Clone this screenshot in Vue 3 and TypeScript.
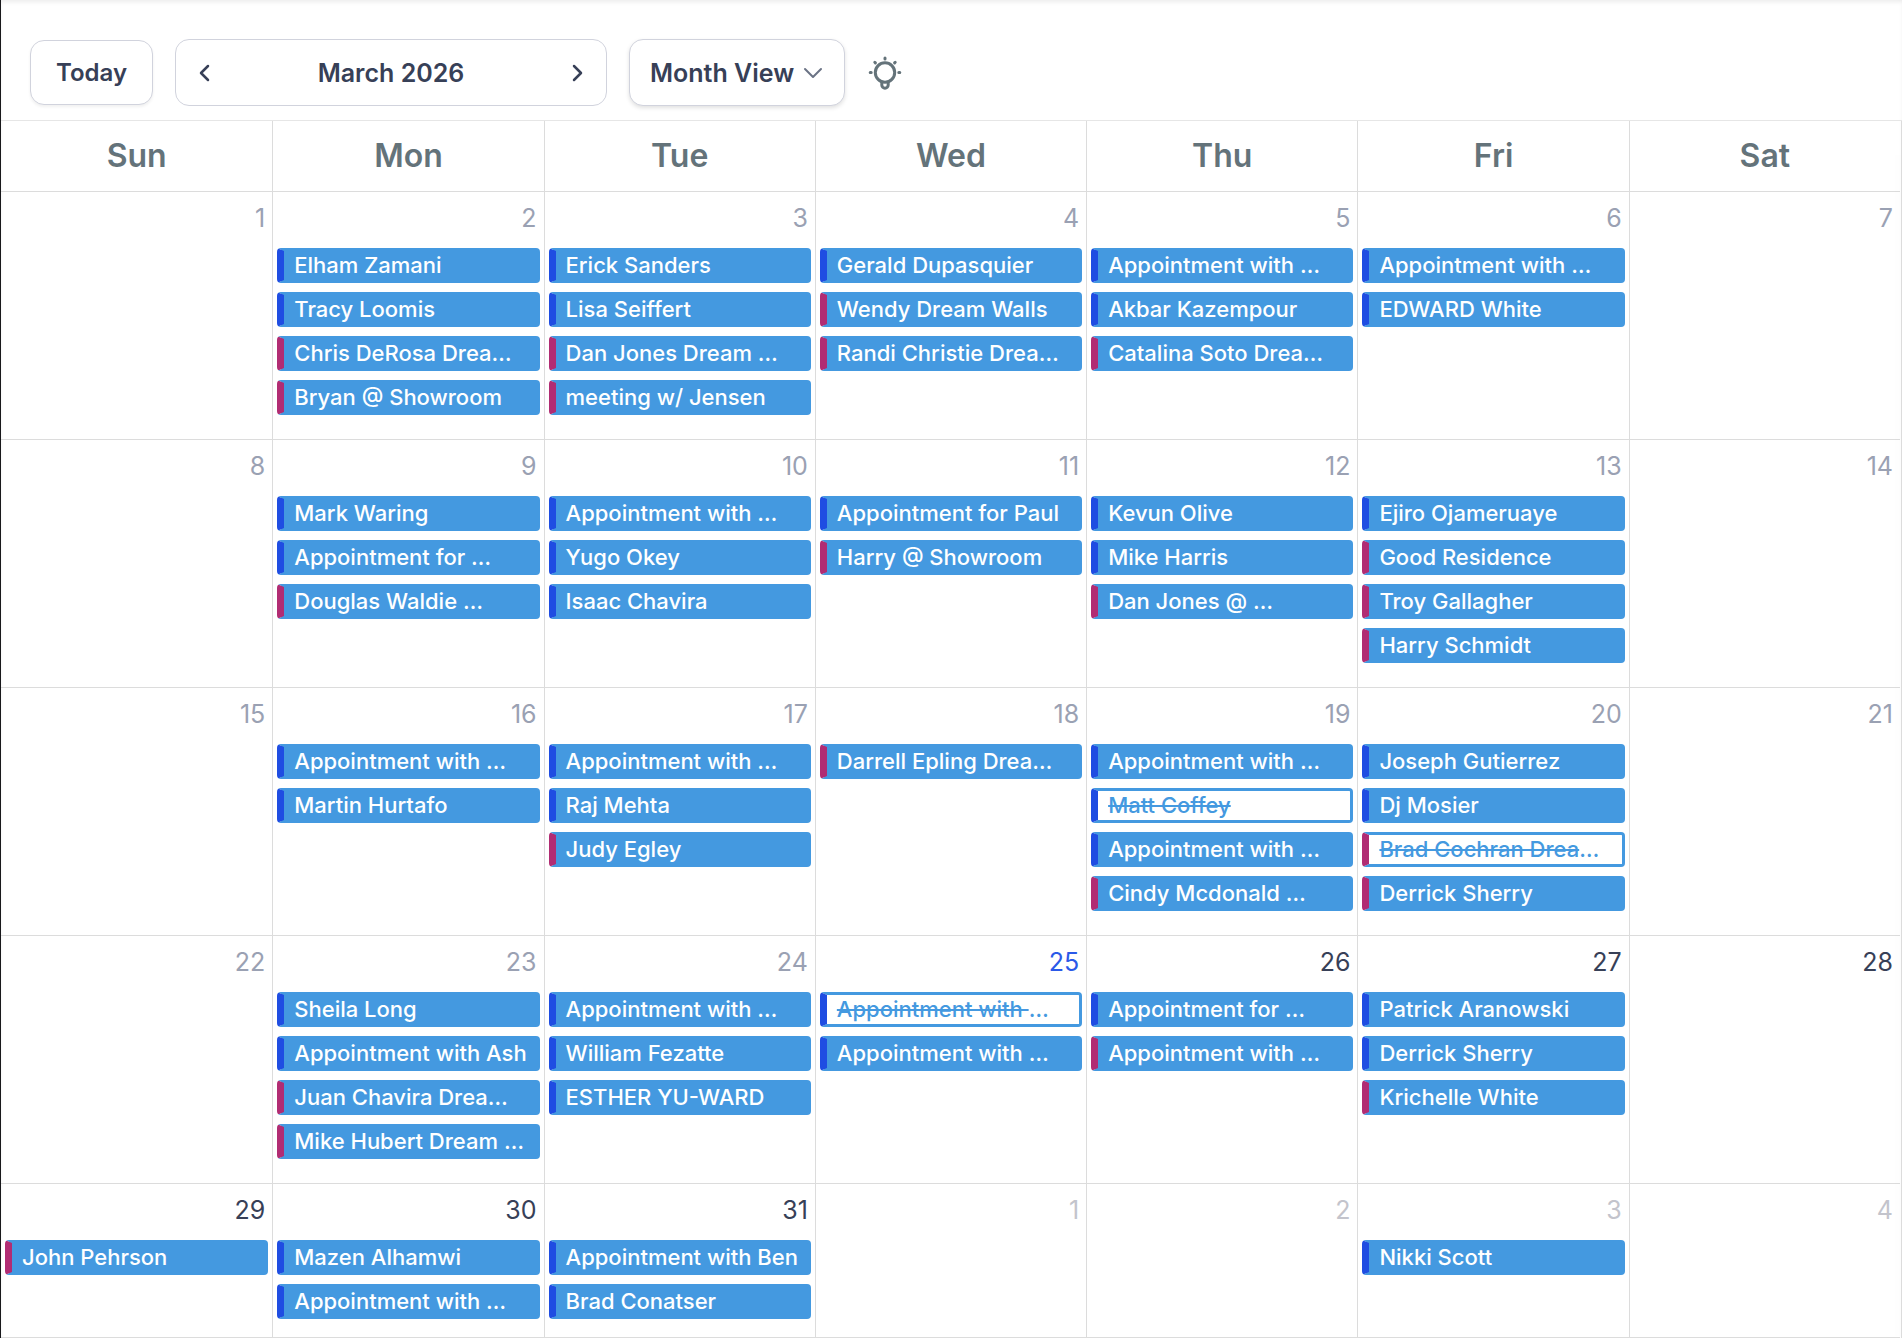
<script setup lang="ts">
import { ref } from 'vue'

type Tone = 'blue' | 'pink'
interface CalendarEvent { title: string; clipped: boolean; tone: Tone; cancelled: boolean }
interface Day { date: number; state: 'past' | 'today' | 'future' | 'outside'; events: CalendarEvent[] }

const weekdays = ['Sun', 'Mon', 'Tue', 'Wed', 'Thu', 'Fri', 'Sat']
const view = ref('Month View')

// Prefixes: "*" marks the pink calendar, "~" marks a cancelled appointment.
const entries: string[][] = [
  [],
  ['Elham Zamani', 'Tracy Loomis', '*Chris DeRosa Drea…', '*Bryan @ Showroom'],
  ['Erick Sanders', 'Lisa Seiffert', '*Dan Jones Dream …', '*meeting w/ Jensen'],
  ['Gerald Dupasquier', '*Wendy Dream Walls', '*Randi Christie Drea…'],
  ['Appointment with …', 'Akbar Kazempour', '*Catalina Soto Drea…'],
  ['Appointment with …', 'EDWARD White'],
  [],
  [],
  ['Mark Waring', 'Appointment for …', '*Douglas Waldie …'],
  ['Appointment with …', 'Yugo Okey', 'Isaac Chavira'],
  ['Appointment for Paul', '*Harry @ Showroom'],
  ['Kevun Olive', 'Mike Harris', '*Dan Jones @ …'],
  ['Ejiro Ojameruaye', '*Good Residence', '*Troy Gallagher', '*Harry Schmidt'],
  [],
  [],
  ['Appointment with …', 'Martin Hurtafo'],
  ['Appointment with …', 'Raj Mehta', '*Judy Egley'],
  ['*Darrell Epling Drea…'],
  ['Appointment with …', '~Matt Coffey', 'Appointment with …', '*Cindy Mcdonald …'],
  ['Joseph Gutierrez', 'Dj Mosier', '*~Brad Cochran Drea…', '*Derrick Sherry'],
  [],
  [],
  ['Sheila Long', 'Appointment with Ash', '*Juan Chavira Drea…', '*Mike Hubert Dream …'],
  ['Appointment with …', 'William Fezatte', 'ESTHER YU-WARD'],
  ['~Appointment with …', 'Appointment with …'],
  ['Appointment for …', '*Appointment with …'],
  ['Patrick Aranowski', 'Derrick Sherry', '*Krichelle White'],
  [],
  ['*John Pehrson'],
  ['Mazen Alhamwi', 'Appointment with …'],
  ['Appointment with Ben', 'Brad Conatser'],
  [],
  [],
  ['Nikki Scott'],
  [],
]

function parse(raw: string): CalendarEvent {
  const tone: Tone = raw.startsWith('*') ? 'pink' : 'blue'
  const rest = raw.replace('*', '')
  const cancelled = rest.startsWith('~')
  const text = rest.replace('~', '')
  return { title: text.replace('…', ''), clipped: text.endsWith('…'), tone, cancelled }
}

const days: Day[] = entries.map((list, i) => {
  const n = i + 1
  return {
    date: n > 31 ? n - 31 : n,
    state: n > 31 ? 'outside' : n > 25 ? 'future' : n === 25 ? 'today' : 'past',
    events: list.map(parse),
  }
})
const weeks = [0, 1, 2, 3, 4].map((w) => days.slice(w * 7, w * 7 + 7))
</script>

<template>
  <main class="calendar">
    <header class="toolbar">
      <button type="button" class="control jump">Today</button>
      <div class="control period">
        <button type="button" class="arrow" aria-label="Previous month">
          <svg width="24" height="24" viewBox="0 0 24 24"><path d="M15 5 8 12l7 7" /></svg>
        </button>
        <span>March 2026</span>
        <button type="button" class="arrow" aria-label="Next month">
          <svg width="24" height="24" viewBox="0 0 24 24"><path d="m9 5 7 7-7 7" /></svg>
        </button>
      </div>
      <div class="view">
        <select v-model="view" class="control" aria-label="Calendar view">
          <option>Month View</option>
        </select>
        <svg width="20" height="12" viewBox="0 0 20 12"><path d="m2 2 8 8 8-8" /></svg>
      </div>
      <button type="button" class="tips" aria-label="Tips">
        <svg width="36" height="36" viewBox="0 0 36 36">
          <circle cx="18" cy="17.500" r="9.700" />
          <path d="M14.800 27v3a3.200 3.200 0 0 0 6.400 0v-3M18 3v1M7.800 7.300l.6.6M28.200 7.300l-.6.6M3.200 17.500h1M31.800 17.500h1" />
        </svg>
      </button>
    </header>

    <section class="grid-area">
      <table>
        <thead>
          <tr><th v-for="d in weekdays" :key="d" scope="col">{{ d }}</th></tr>
        </thead>
        <tbody>
          <tr v-for="(week, w) in weeks" :key="w">
            <td v-for="(day, i) in week" :key="i">
              <div class="date" :class="day.state">{{ day.date }}</div>
              <div class="events">
                <button
                  v-for="(e, k) in day.events"
                  :key="k"
                  type="button"
                  class="event"
                  :class="[e.tone, { cancelled: e.cancelled }]"
                ><span class="title">{{ e.title }}</span><span v-if="e.clipped">…</span></button>
              </div>
            </td>
          </tr>
        </tbody>
      </table>
      <div class="drawer-edge"></div>
    </section>
  </main>
</template>

<style>
body { background: #fff; }
</style>

<style scoped>
.calendar {
  font-family: Inter, "Liberation Sans", sans-serif;
  color: #374057;
  border-left: 1px solid #18181b;
  box-shadow: inset 0 3px 4px -1px #ececec;
}
button, select { font: inherit; color: inherit; margin: 0; cursor: pointer; }
svg { fill: none; stroke: currentColor; stroke-linecap: round; stroke-linejoin: round; flex: none; }

.toolbar {
  display: flex;
  align-items: center;
  gap: 22px;
  height: 67px;
  padding: 39px 29px 14px;
  font-size: 25px;
  font-weight: 600;
}
.control {
  box-sizing: border-box;
  height: 67px;
  border: 1px solid #d1d3dd;
  border-radius: 14px;
  background: #fff;
}
.jump {
  width: 123px;
  height: 65px;
  padding: 0;
  font-size: 24px;
  box-shadow: 0 2px 3px rgba(0, 0, 0, 0.06);
}
.period {
  display: flex;
  align-items: center;
  justify-content: space-between;
  width: 432px;
  padding: 0 17px;
}
.arrow { display: flex; padding: 0; border: 0; background: none; }
.arrow svg { stroke-width: 2.5; }
.view { display: grid; align-items: center; }
.view > * { grid-area: 1 / 1; }
.view select {
  appearance: none;
  width: 216px;
  padding: 1px 40px 0 20px;
  box-shadow: 0 2px 4px rgba(0, 0, 0, 0.12);
}
.view svg { justify-self: end; margin-right: 22px; color: #6b7385; stroke-width: 2; pointer-events: none; }
.tips { display: flex; padding: 0; border: 0; background: none; color: #64737a; }
.tips svg { stroke-width: 3; }

.grid-area {
  position: relative;
  overflow: hidden;
  padding-right: 2px;
  border-top: 1px solid #e6e6e6;
}
table { width: 100%; table-layout: fixed; border-collapse: separate; border-spacing: 0; }
th, td { box-sizing: border-box; padding: 0; border-bottom: 1px solid #dcdcdc; }
th + th, td + td { border-left: 1px solid #dcdcdc; }
th { height: 71px; padding-bottom: 2px; font-size: 32px; font-weight: 600; color: #64737a; }
td { height: 248px; vertical-align: top; }
tr:last-child td { height: 154px; }

.date { padding: 8px 7px 12px; font-size: 25px; line-height: 36px; text-align: right; }
.past { color: #9aa1b3; }
.today { color: #2b59e8; }
.outside { color: #c3c4cc; }

.events { display: flex; flex-direction: column; gap: 9px; padding: 0 4px; }
.event {
  box-sizing: border-box;
  height: 35px;
  padding: 0 0 0 10px;
  border: 3px solid #4499e0;
  border-left-width: 7px;
  border-radius: 4px;
  background: #4499e0;
  color: #fff;
  font-size: 22px;
  font-weight: 500;
  line-height: 29px;
  text-align: left;
  white-space: pre;
  overflow: hidden;
}
.event.blue { border-left-color: #1f4de2; }
.event.pink { border-left-color: #b12c73; }
.event.cancelled { background: #fff; color: #4499e0; }
.cancelled .title { text-decoration: line-through; }

.drawer-edge {
  position: absolute;
  top: 0;
  right: 0;
  bottom: 0;
  width: 1px;
  background: #dcdcdc;
  box-shadow: 0 16px 24px rgba(0, 0, 0, 0.12);
}
</style>
